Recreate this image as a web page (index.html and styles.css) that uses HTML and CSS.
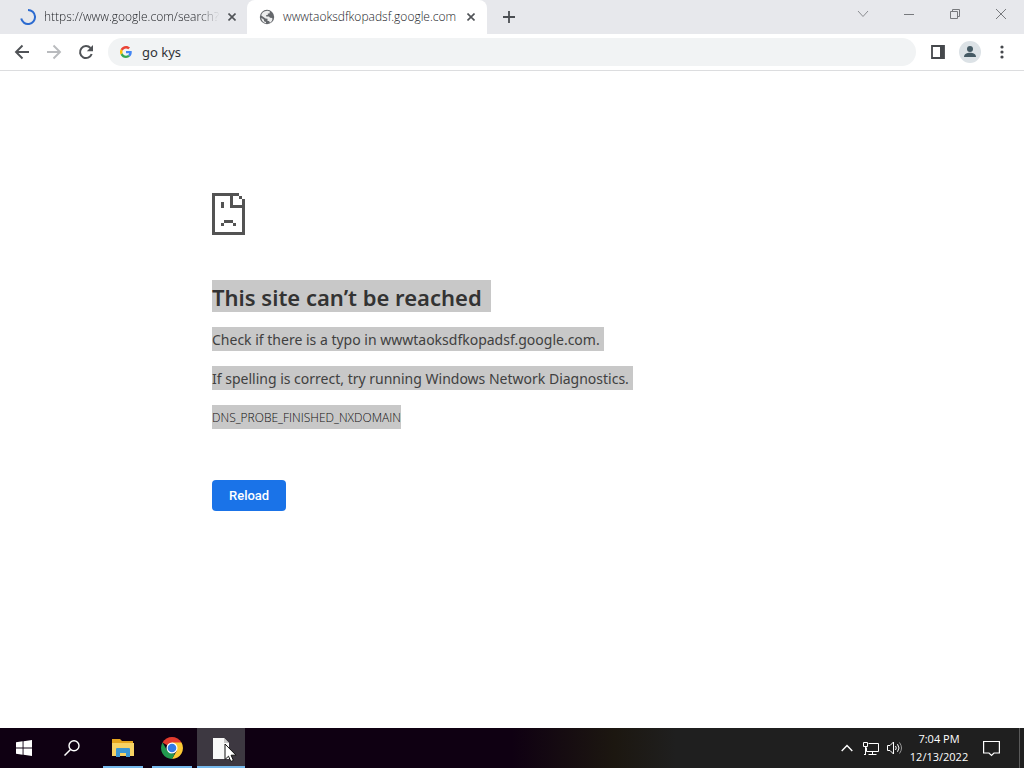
FILE: index.html
```html
<!DOCTYPE html>
<html lang="en">
<head>
<meta charset="utf-8">
<title>wwwtaoksdfkopadsf.google.com</title>
<link rel="stylesheet" href="styles.css">
</head>
<body>
<header class="tabstrip">
  <div class="tab tab-first">
    <svg class="favicon" viewBox="0 0 16 16"><path d="M8 1a7 7 0 1 1-6.8 8.6" fill="none" stroke="#2c6bd0" stroke-width="2"/></svg>
    <span class="tab-title tab-title-fade">https://www.google.com/search?</span>
    <button class="tab-close" aria-label="Close tab"><svg width="8" height="8" viewBox="0 0 8 8"><path d="M.5.5l7 7M7.500.5l-7 7" stroke="#505357" stroke-width="1.6"/></svg></button>
  </div>
  <div class="tab tab-active">
    <svg class="favicon" viewBox="0 0 16 16"><circle cx="8" cy="8" r="7.200" fill="#65686c"/><path d="M8.500 1.800l2.500.8-.6 2H8.800v1.500H7.200v1.500h2.800l1 1.200 2.300.2c.5 2.500-1 4-2.300 4.800l-1-1.800H8.500V9.800L6.500 9.600 2.300 6.500C2.700 4 4.500 2 8.500 1.800zM2.300 8.800L5 10.800v1.500l2 .8v1.100C4 13.500 2.500 11.500 2.300 8.800z" fill="#fff" fill-opacity=".88"/></svg>
    <span class="tab-title">wwwtaoksdfkopadsf.google.com</span>
    <button class="tab-close" aria-label="Close tab"><svg width="8" height="8" viewBox="0 0 8 8"><path d="M.5.5l7 7M7.500.5l-7 7" stroke="#505357" stroke-width="1.6"/></svg></button>
  </div>
  <button class="new-tab" aria-label="New tab"><svg width="12" height="12" viewBox="0 0 12 12"><path d="M6 0v12M0 6h12" stroke="#4b4e52" stroke-width="1.800"/></svg></button>
  <div class="window-controls">
    <button aria-label="Search tabs"><svg width="12" height="12" viewBox="0 0 12 12"><path d="M1 3l5 5.500L11 3" fill="none" stroke="#8b8d91"/></svg></button>
    <button aria-label="Minimize"><svg width="12" height="12" viewBox="0 0 12 12"><path d="M1 6.500h10" stroke="#77797d"/></svg></button>
    <button aria-label="Restore"><svg width="12" height="12" viewBox="0 0 12 12"><path d="M1.500 3.500h7v7h-7zM3.500 3.500v-2h7v7h-2" fill="none" stroke="#77797d"/></svg></button>
    <button aria-label="Close"><svg width="12" height="12" viewBox="0 0 12 12"><path d="M1 1l10 10M11 1L1 11" stroke="#77797d"/></svg></button>
  </div>
</header>
<nav class="toolbar">
  <button class="tool" aria-label="Back"><svg width="16" height="16" viewBox="0 0 16 16"><path d="M15 8H2M8.500 1.500L2 8l6.500 6.500" fill="none" stroke="#505357" stroke-width="1.900"/></svg></button>
  <button class="tool" aria-label="Forward" disabled><svg width="16" height="16" viewBox="0 0 16 16"><path d="M1 8h13M7.500 1.500L14 8l-6.500 6.500" fill="none" stroke="#b9bbbe" stroke-width="1.900"/></svg></button>
  <button class="tool" aria-label="Reload page"><svg width="16" height="16" viewBox="0 0 16 16"><path d="M13.700 10A6 6 0 1 1 12.500 4" fill="none" stroke="#505357" stroke-width="2"/><path d="M15 1v6.200H8.800z" fill="#505357"/></svg></button>
  <div class="omnibox">
    <svg width="12" height="12" viewBox="0 0 48 48"><path fill="#ea4335" d="M24 9.500c3.500 0 6.700 1.200 9.200 3.600l6.900-6.900C35.900 2.400 30.500 0 24 0 14.600 0 6.500 5.400 2.600 13.200l8 6.200C12.400 13.700 17.700 9.500 24 9.500z"/><path fill="#4285f4" d="M47 24.600c0-1.600-.2-3.100-.4-4.600H24v9h12.900c-.6 3-2.200 5.500-4.700 7.200l7.700 6C44.400 38 47 32 47 24.600z"/><path fill="#fbbc05" d="M10.500 28.600a14 14 0 0 1 0-9.200l-8-6.200a24 24 0 0 0 0 21.600z"/><path fill="#34a853" d="M24 48c6.500 0 11.900-2.100 15.900-5.800l-7.700-6c-2.200 1.500-4.900 2.300-8.200 2.300-6.300 0-11.600-4.200-13.500-9.900l-8 6.200C6.500 42.600 14.600 48 24 48z"/></svg>
    <input class="address" type="text" aria-label="Address" value="go kys">
  </div>
  <div class="toolbar-end">
    <button class="tool" aria-label="Side panel"><svg width="14" height="14" viewBox="0 0 14 14"><path d="M1 1h12v12H1z" fill="none" stroke="#45484c" stroke-width="1.800"/><path d="M9 1h4v12H9z" fill="#45484c"/></svg></button>
    <button class="tool" aria-label="Profile"><svg width="22" height="22" viewBox="0 0 22 22"><circle cx="11" cy="11" r="11" fill="#dce2e6"/><circle cx="11" cy="8" r="3" fill="#455a64"/><path d="M5 16c0-3 3-4.200 6-4.200s6 1.200 6 4.200z" fill="#455a64"/></svg></button>
    <button class="tool" aria-label="Menu"><svg width="4" height="14" viewBox="0 0 4 14"><g fill="#45484c"><circle cx="2" cy="2" r="1.600"/><circle cx="2" cy="7" r="1.600"/><circle cx="2" cy="12" r="1.600"/></g></svg></button>
  </div>
</nav>
<main class="page">
  <div class="error">
    <svg class="sad" width="33" height="42" viewBox="0 0 33 42" shape-rendering="crispEdges"><path fill="#535353" d="M0 0h27v3h3v3h3v36H0zM3 3v36h27V15H18V3zM21 3v9h9V6h-3V3zM9 9h3v6H9zM12 27h9v3h-9zM9 30h3v3H9zM21 30h3v3h-3z" fill-rule="evenodd"/></svg>
    <h1 class="headline"><span class="selected">This site can’t be reached&nbsp;</span></h1>
    <p class="message"><span class="selected">Check if there is a typo in wwwtaoksdfkopadsf.google.com.</span></p>
    <p class="message"><span class="selected">If spelling is correct, try running Windows Network Diagnostics.</span></p>
    <p class="code"><span class="selected">DNS_PROBE_FINISHED_NXDOMAIN</span></p>
    <button class="reload">Reload</button>
  </div>
</main>
<footer class="taskbar">
  <button class="task" aria-label="Start"><svg width="16" height="16" viewBox="0 0 16 16"><path fill="#fff" d="M0 2.200l6.600-.9v6.200H0zM7.500 1.200L16 0v7.500H7.500zM0 8.400h6.600v6.300L0 13.800zM7.500 8.400H16V16l-8.500-1.200z"/></svg></button>
  <button class="task" aria-label="Search"><svg width="16" height="16" viewBox="0 0 16 16"><circle cx="10" cy="5.800" r="5" fill="none" stroke="#fff" stroke-width="1.400"/><path d="M6.500 9.500L.5 15.500" stroke="#fff" stroke-width="1.500"/></svg></button>
  <button class="task task-open" aria-label="File Explorer"><svg width="22" height="18" viewBox="0 0 22 18"><path fill="#e5a51e" d="M0 0h8l2 2h11v4H0z"/><path fill="#f7d264" d="M0 4h22v13H0z"/><path fill="#3c96d2" d="M4 10q0-1 1-1h12q1 0 1 1v8h-4v-4H8v4H4z"/></svg></button>
  <button class="task task-open" aria-label="Chrome"><svg width="22" height="22" viewBox="0 0 22 22"><path fill="#e33b2e" d="M11 11L1.500 5.500a11 11 0 0 1 19 0z"/><path fill="#fcc934" d="M11 11V5.500h9.500A11 11 0 0 1 11 22l4.800-8.300z"/><path fill="#22994f" d="M1.500 5.500l4.800 8.300L11 16.500h3L11 22A11 11 0 0 1 1.500 5.500z"/><circle cx="11" cy="11" r="5.500" fill="#fff"/><circle cx="11" cy="11" r="4.300" fill="#347be6"/></svg></button>
  <button class="task task-open task-current" aria-label="Document"><svg width="16" height="21" viewBox="0 0 16 21"><path fill="#f8f8f8" d="M0 0h11l5 5v16H0z"/><path fill="#c8c8c8" d="M11 0l5 5h-5z"/></svg>
    <svg class="cursor" width="13" height="20" viewBox="0 0 13 20"><path d="M1 1v15.500l3.500-3.300 2.300 5.300 2.600-1.100-2.300-5.200H12z" fill="#fff" stroke="#111"/></svg></button>
  <div class="tray">
    <button class="tray-item" aria-label="Show hidden icons"><svg width="12" height="8" viewBox="0 0 12 8"><path d="M.7 7L6 1.500 11.300 7" fill="none" stroke="#fff" stroke-width="1.400"/></svg></button>
    <button class="tray-item" aria-label="Network"><svg width="16" height="15" viewBox="0 0 16 15"><path d="M5.500 2.500h10v8H3.500v-4M.5 1.500h4v4h-4zM2.500 5.500v8M9.500 10.500v3M5.500 13.500h8M1 13.500h2" fill="none" stroke="#fff"/></svg></button>
    <button class="tray-item" aria-label="Volume"><svg width="16" height="14" viewBox="0 0 16 14"><path d="M.5 4.500h2.500L6.500 1v12L3 9.500H.5z" fill="none" stroke="#fff"/><path d="M8.500 5q1.500 2 0 4M10.500 3.200q3 3.800 0 7.600" fill="none" stroke="#fff"/><path d="M12.500 1.500q4 5.500 0 11" fill="none" stroke="#999"/></svg></button>
    <div class="clock"><time>7:04 PM</time><time>12/13/2022</time></div>
    <button class="notify" aria-label="Notifications"><svg width="17" height="17" viewBox="0 0 17 17"><path d="M.6 1.500h15.800v11.500h-5.400L8.500 15.500 6 13H.6z" fill="none" stroke="#fff" stroke-width="1.200"/></svg></button>
    <button class="show-desktop" aria-label="Show desktop"></button>
  </div>
</footer>
</body>
</html>
```

FILE: styles.css
```css
* { box-sizing: border-box; }
body {
  margin: 0;
  min-height: 100vh;
  display: flex;
  flex-direction: column;
  background: #fff;
  font-family: "Open Sans", "Noto Sans", sans-serif;
  color: #3c4043;
}
button {
  display: flex;
  align-items: center;
  justify-content: center;
  padding: 0;
  border: 0;
  background: none;
  font: inherit;
}
svg { display: block; flex: none; }

.tabstrip {
  display: flex;
  height: 34px;
  background: #e7e8ec;
}
.tab {
  display: flex;
  align-items: center;
  width: 240px;
  padding: 0 12px;
  gap: 8px;
}
.tab-first { width: 247px; padding: 0 11px 0 20px; }
.tab-active { background: #fff; border-radius: 8px 8px 0 0; }
.favicon { width: 16px; height: 16px; }
.tab-title {
  flex: 1;
  min-width: 0;
  white-space: nowrap;
  font-size: 12px;
  font-weight: 300;
  line-height: 20px;
  color: #222428;
}
.tab-title-fade {
  -webkit-mask-image: linear-gradient(to right, #000 88%, transparent);
  mask-image: linear-gradient(to right, #000 88%, transparent);
}
.tab-close { width: 8px; }
.new-tab { width: 44px; }
.window-controls { display: flex; height: 28px; margin-left: auto; }
.window-controls button { width: 46px; }

.toolbar {
  display: flex;
  align-items: center;
  height: 37px;
  padding: 0 6px;
  border-bottom: 1px solid #dcdddf;
}
.tool { width: 32px; height: 32px; }
.omnibox {
  flex: 1;
  display: flex;
  align-items: center;
  gap: 10px;
  height: 28px;
  margin-left: 6px;
  padding: 0 12px;
  border-radius: 14px;
  background: #f1f3f4;
}
.address {
  flex: 1;
  border: 0;
  padding: 0;
  background: none;
  font: 13px/20px "Noto Sans", "Open Sans", sans-serif;
  color: #303236;
}
.toolbar-end { display: flex; margin-left: 6px; }

.page { flex: 1; }
.error {
  max-width: 600px;
  margin: 122px auto 0;
}
.selected { display: inline-block; padding: 2px 4px 0 0; background: #c8c8c8; }
.headline {
  margin: 45px 0 15px;
  font-family: "Noto Sans", "Open Sans", sans-serif;
  font-size: 22px;
  line-height: 30px;
  font-weight: 600;
  color: #333;
}
.message, .code {
  margin: 0 0 15px;
  font-size: 14px;
  line-height: 22px;
  color: #404040;
}
.message { font-family: "Noto Sans", "Open Sans", sans-serif; }
.code { font-size: 12px; font-weight: 300; color: #111; }
.code .selected { padding-right: 0; }
.reload {
  margin-top: 51px;
  padding: 0 17px;
  border-radius: 4px;
  background: #1a73e8;
  color: #fff;
  font: 500 13px/31px Roboto, Arial, sans-serif;
}

.taskbar {
  display: flex;
  height: 40px;
  background: linear-gradient(to right, #0f0012 50%, #1c1710 60%, #1f1f1f 66%);
}
.task { width: 48px; }
.task-open { margin-left: 7px; width: 40px; box-shadow: inset 0 -2px #76b9ed; }
.task-open + .task-open { margin-left: 9px; }
.task-open + .task-current { position: relative; width: 48px; margin-left: 5px; background: #3d3841; }
.cursor { position: absolute; left: 27px; top: 15px; }
.tray { display: flex; margin-left: auto; }
.tray-item { width: 24px; }
.clock {
  display: flex;
  flex-direction: column;
  justify-content: center;
  width: 64px;
  text-align: center;
  font-size: 11px;
  line-height: 18px;
  color: #fff;
}
.notify { width: 40px; }
.show-desktop { width: 5px; margin-left: 8px; border-left: 1px solid #5a5a5a; }
```
